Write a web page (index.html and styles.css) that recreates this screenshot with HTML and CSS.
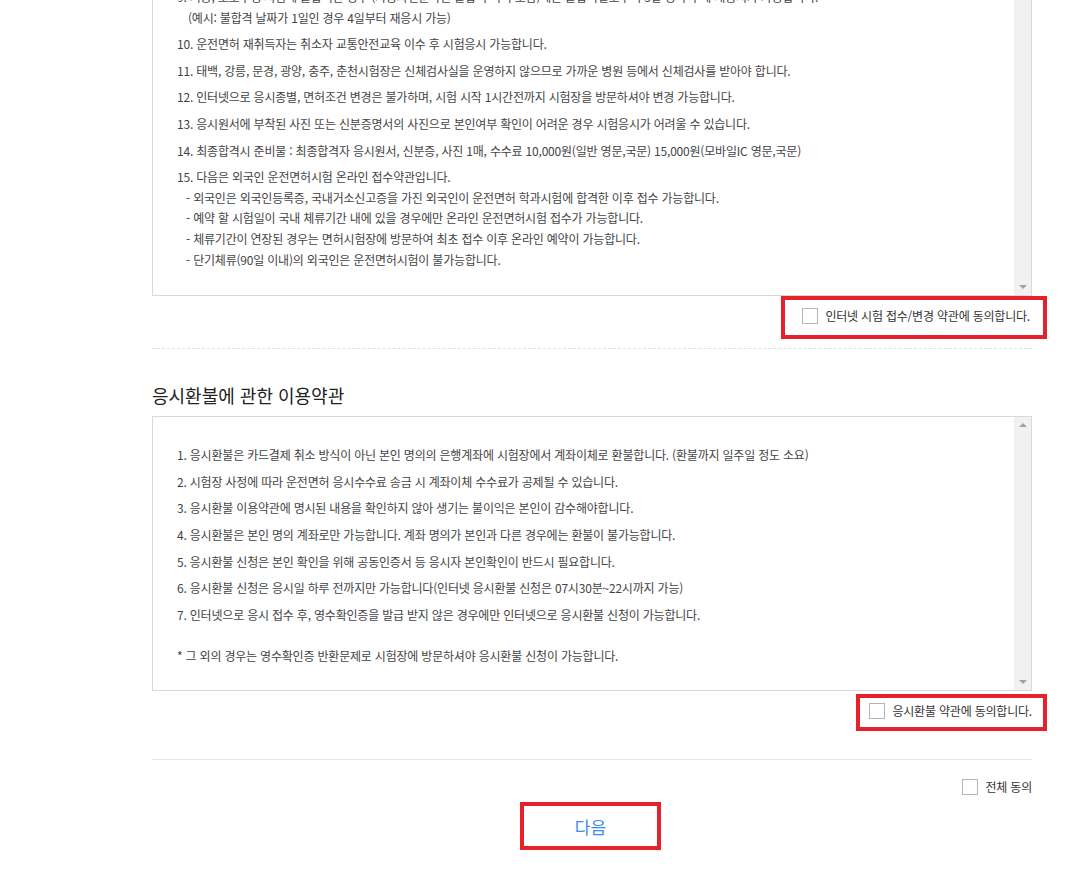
FILE: index.html
```html
<!DOCTYPE html>
<html lang="ko">

<head>
    <meta charset="UTF-8">
    <meta name="viewport" content="width=device-width, initial-scale=1.0">
    <title>온라인 접수 약관 동의</title>
    <link rel="stylesheet" href="styles.css">
</head>

<body>
    <div class="content">
        <div class="terms-box terms-box-first">
            <div class="terms-body">
                <div class="item">
                    <p>9. 기능, 도로주행 시험에 불합격한 경우 (자동차전문학원 불합격 이력 포함)에는 불합격일로부터 3일 경과 후에 재응시가 가능합니다.</p>
                    <p class="indent">(예시: 불합격 날짜가 1일인 경우 4일부터 재응시 가능)</p>
                </div>
                <div class="item"><p>10. 운전면허 재취득자는 취소자 교통안전교육 이수 후 시험응시 가능합니다.</p></div>
                <div class="item"><p>11. 태백, 강릉, 문경, 광양, 충주, 춘천시험장은 신체검사실을 운영하지 않으므로 가까운 병원 등에서 신체검사를 받아야 합니다.</p></div>
                <div class="item"><p>12. 인터넷으로 응시종별, 면허조건 변경은 불가하며, 시험 시작 1시간전까지 시험장을 방문하셔야 변경 가능합니다.</p></div>
                <div class="item"><p>13. 응시원서에 부착된 사진 또는 신분증명서의 사진으로 본인여부 확인이 어려운 경우 시험응시가 어려울 수 있습니다.</p></div>
                <div class="item"><p>14. 최종합격시 준비물 : 최종합격자 응시원서, 신분증, 사진 1매, 수수료 10,000원(일반 영문,국문) 15,000원(모바일IC 영문,국문)</p></div>
                <div class="item">
                    <p>15. 다음은 외국인 운전면허시험 온라인 접수약관입니다.</p>
                    <p class="sub">- 외국인은 외국인등록증, 국내거소신고증을 가진 외국인이 운전면허 학과시험에 합격한 이후 접수 가능합니다.</p>
                    <p class="sub">- 예약 할 시험일이 국내 체류기간 내에 있을 경우에만 온라인 운전면허시험 접수가 가능합니다.</p>
                    <p class="sub">- 체류기간이 연장된 경우는 면허시험장에 방문하여 최초 접수 이후 온라인 예약이 가능합니다.</p>
                    <p class="sub">- 단기체류(90일 이내)의 외국인은 운전면허시험이 불가능합니다.</p>
                </div>
            </div>
            <div class="scrollbar">
                <span class="arrow-up"></span>
                <span class="arrow-down"></span>
            </div>
        </div>

        <div class="agree">
            <label class="agree-label mark mark-first">
                <input type="checkbox">
                <span>인터넷 시험 접수/변경 약관에 동의합니다.</span>
            </label>
        </div>

        <hr class="line-dashed">

        <h2 class="section-title">응시환불에 관한 이용약관</h2>

        <div class="terms-box">
            <div class="terms-body">
                <div class="item"><p>1. 응시환불은 카드결제 취소 방식이 아닌 본인 명의의 은행계좌에 시험장에서 계좌이체로 환불합니다. (환불까지 일주일 정도 소요)</p></div>
                <div class="item"><p>2. 시험장 사정에 따라 운전면허 응시수수료 송금 시 계좌이체 수수료가 공제될 수 있습니다.</p></div>
                <div class="item"><p>3. 응시환불 이용약관에 명시된 내용을 확인하지 않아 생기는 불이익은 본인이 감수해야합니다.</p></div>
                <div class="item"><p>4. 응시환불은 본인 명의 계좌로만 가능합니다. 계좌 명의가 본인과 다른 경우에는 환불이 불가능합니다.</p></div>
                <div class="item"><p>5. 응시환불 신청은 본인 확인을 위해 공동인증서 등 응시자 본인확인이 반드시 필요합니다.</p></div>
                <div class="item"><p>6. 응시환불 신청은 응시일 하루 전까지만 가능합니다(인터넷 응시환불 신청은 07시30분~22시까지 가능)</p></div>
                <div class="item"><p>7. 인터넷으로 응시 접수 후, 영수확인증을 발급 받지 않은 경우에만 인터넷으로 응시환불 신청이 가능합니다.</p></div>
                <div class="item note"><p>* 그 외의 경우는 영수확인증 반환문제로 시험장에 방문하셔야 응시환불 신청이 가능합니다.</p></div>
            </div>
            <div class="scrollbar">
                <span class="arrow-up"></span>
                <span class="arrow-down"></span>
            </div>
        </div>

        <div class="agree">
            <label class="agree-label mark mark-second">
                <input type="checkbox">
                <span>응시환불 약관에 동의합니다.</span>
            </label>
        </div>

        <hr class="line-solid">

        <div class="agree agree-all">
            <label class="agree-label">
                <input type="checkbox">
                <span>전체 동의</span>
            </label>
        </div>

        <div class="btn-area">
            <button class="btn-next mark" type="button">다음</button>
        </div>
    </div>
</body>

</html>
```

FILE: styles.css
```css
body {
    margin: 0;
    font-family: "Noto Sans CJK KR", "Noto Sans", sans-serif;
    color: #444;
    background: #fff;
}

p {
    margin: 0;
}

.content {
    width: 880px;
    margin-left: 152px;
    padding-bottom: 40px;
}

/* 약관 박스 */
.terms-box {
    display: flex;
    height: 275px;
    border: 1px solid #d9d9d9;
    box-sizing: border-box;
}

.terms-box-first {
    height: auto;
    margin-top: -42px;
}

.terms-body {
    flex: 1;
    padding: 28px 24px 25px;
    font-size: 12px;
    line-height: 20.6px;
    letter-spacing: -0.2px;
}

.item {
    margin-bottom: 6px;
}

.item:last-child {
    margin-bottom: 0;
}

.indent {
    padding-left: 11px;
}

.sub {
    padding-left: 9px;
}

.note {
    margin-top: 21px;
}

.scrollbar {
    width: 17px;
    background: #f1f1f1;
    display: flex;
    flex-direction: column;
    justify-content: space-between;
    align-items: center;
    padding: 6px 0;
}

.arrow-up,
.arrow-down {
    width: 0;
    height: 0;
    border-left: 4px solid transparent;
    border-right: 4px solid transparent;
}

.arrow-up {
    border-bottom: 4px solid #a3a3a3;
}

.arrow-down {
    border-top: 4px solid #a3a3a3;
}

/* 동의 체크 */
.agree {
    display: flex;
    justify-content: flex-end;
}

.agree-label {
    display: inline-flex;
    align-items: center;
    gap: 7px;
    font-size: 12px;
    line-height: 16px;
    letter-spacing: -0.2px;
    color: #333;
}

.agree-label input {
    appearance: none;
    -webkit-appearance: none;
    width: 16px;
    height: 16px;
    margin: 0;
    border: 1px solid #b5b5b5;
    background: #fff;
}

.mark {
    border: 4px solid #e4222b;
}

.mark-first {
    padding: 8px 13px 11px 17px;
    margin-right: -15px;
}

.mark-second {
    margin-top: 3px;
    padding: 5px 11px 8px 9px;
    margin-right: -15px;
}

.line-dashed {
    margin: 9px 0 0;
    border: 0;
    border-top: 1px dashed #e0e0e0;
}

.section-title {
    margin: 34px 0 9px;
    font-size: 18px;
    line-height: 24px;
    font-weight: normal;
    letter-spacing: 0;
    color: #222;
}

.line-solid {
    margin: 28px 0 0;
    border: 0;
    border-top: 1px solid #e6e6e6;
}

.agree-all {
    margin-top: 19px;
}

.btn-area {
    display: flex;
    justify-content: center;
    margin-top: 7px;
    padding-right: 3px;
}

.btn-next {
    width: 141px;
    height: 48px;
    background: #fff;
    color: #3a8ee6;
    font-family: inherit;
    font-size: 17px;
    cursor: pointer;
}
```
